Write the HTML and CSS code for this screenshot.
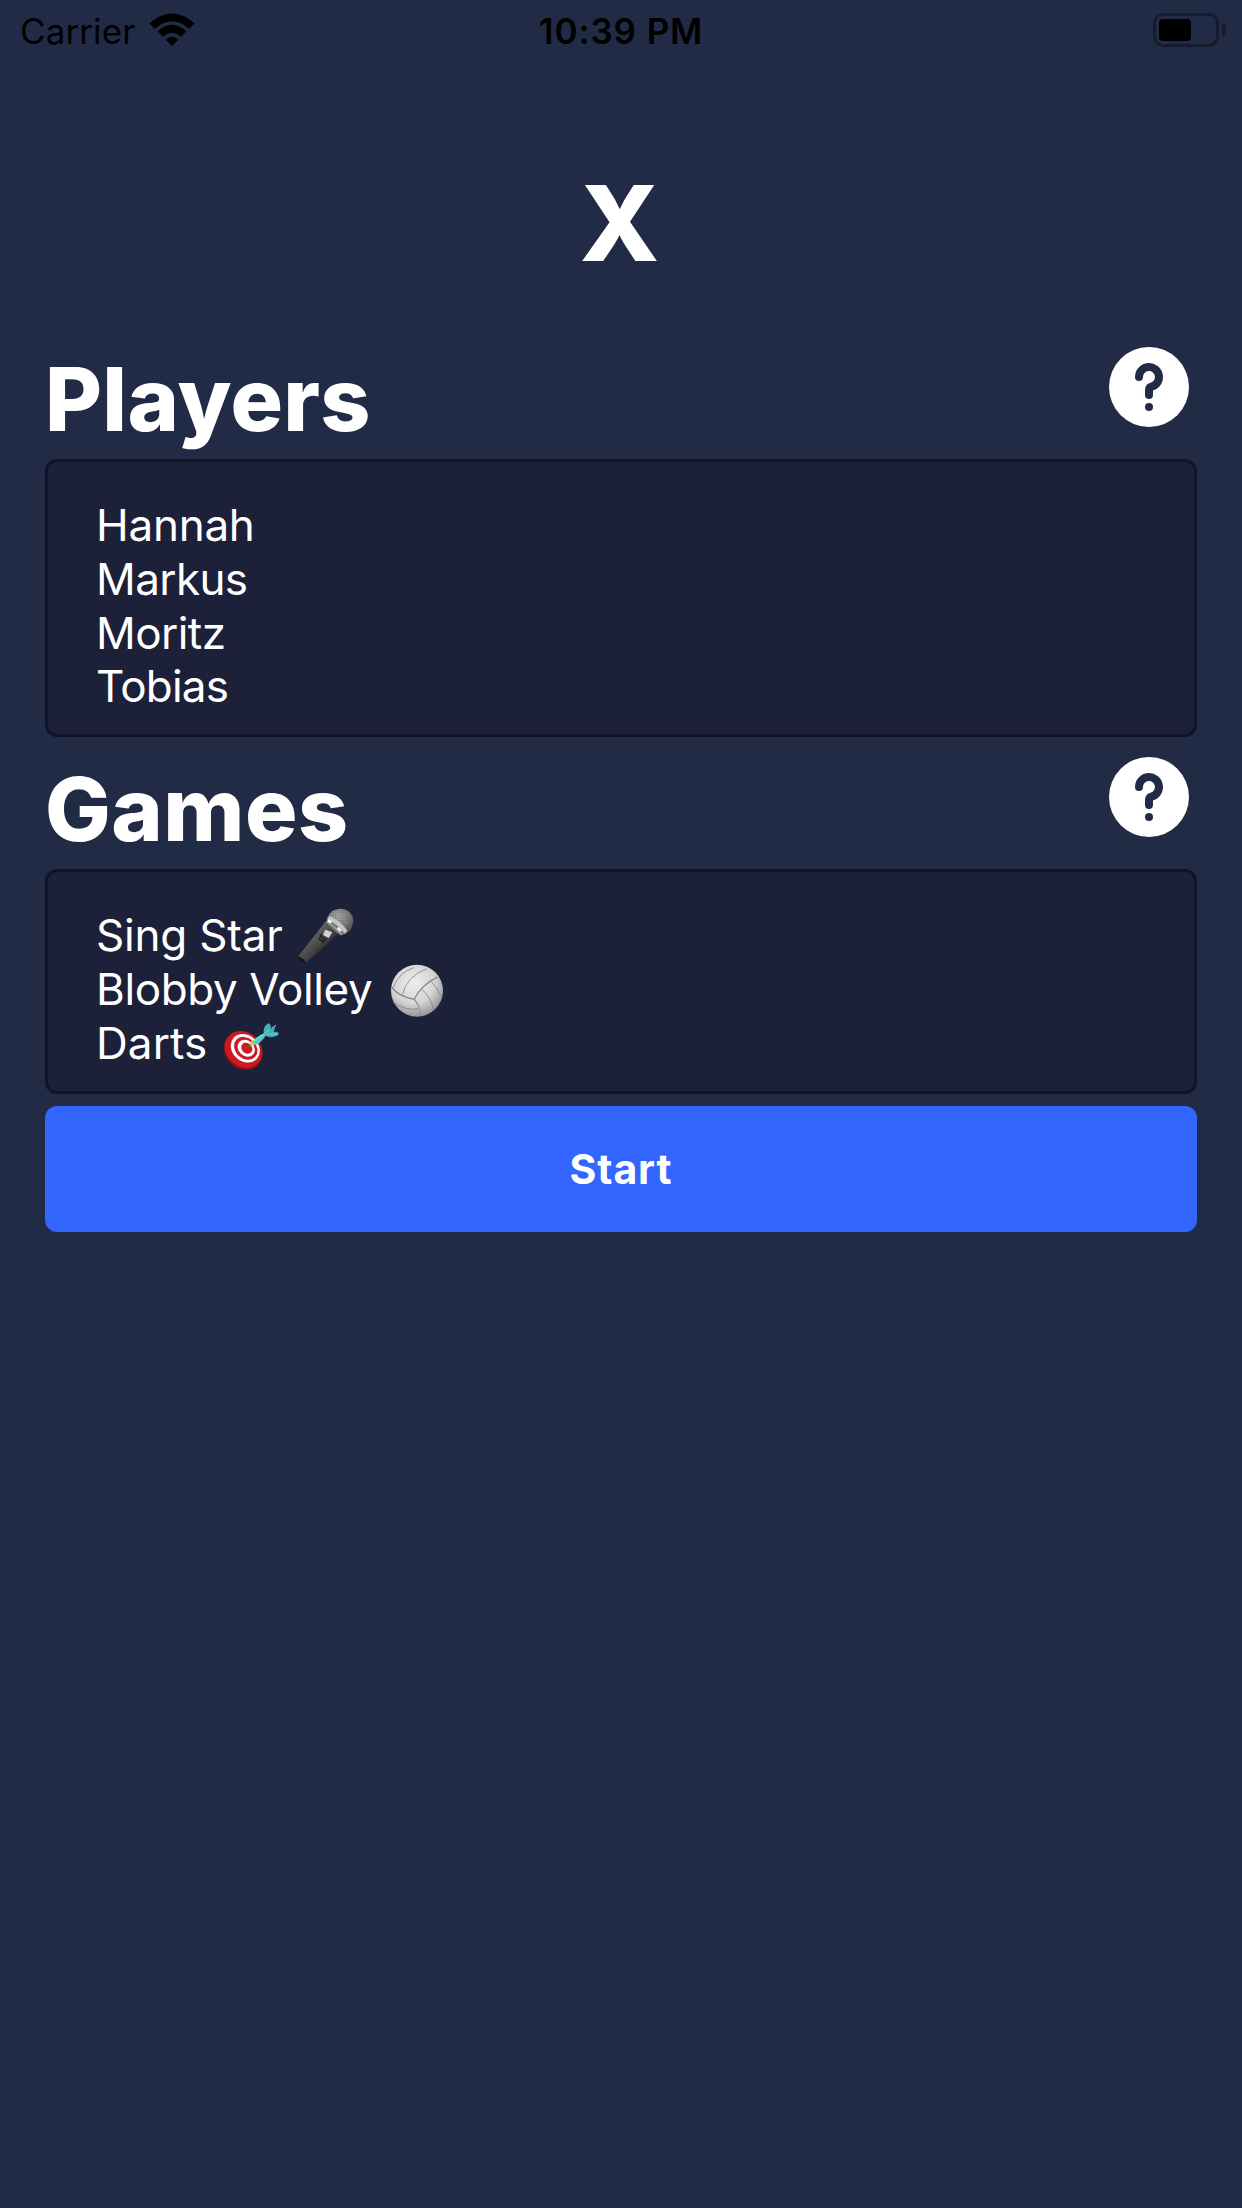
FILE: index.html
```
<!DOCTYPE html>
<html lang="en">
<head>
<meta charset="utf-8">
<title>X</title>
<link rel="stylesheet" href="styles.css">
</head>
<body>
<header class="status">
  <div class="status-left">
    <span class="carrier">Carrier</span>
    <svg class="wifi" viewBox="0 0 138 102">
      <path d="M1 31Q69-28 137 31L121 47Q69 2 17 47Z"/>
      <path d="M26 55Q69 16 112 55L96 71Q69 47 42 71Z"/>
      <path d="M50 80Q69 63 88 80L69 99Z"/>
    </svg>
  </div>
  <span class="time">10:39 PM</span>
  <div class="status-right">
    <div class="battery"><div class="charge"></div></div>
    <div class="nub"></div>
  </div>
</header>
<main class="screen">
  <h1 class="title">X</h1>
  <section>
    <div class="heading">
      <h2 class="players">Players</h2>
      <svg class="help" viewBox="0 0 80 80">
        <circle cx="40" cy="40" r="40"/>
        <path d="M30 30A10 10 0 1 1 42.500 39.700Q40 40.300 40 43V48"/>
        <circle class="dot" cx="40" cy="60" r="4"/>
      </svg>
    </div>
    <ul class="card card-players">
      <li class="hannah">Hannah</li>
      <li class="markus">Markus</li>
      <li class="moritz">Moritz</li>
      <li class="tobias">Tobias</li>
    </ul>
  </section>
  <section>
    <div class="heading">
      <h2 class="games">Games</h2>
      <svg class="help" viewBox="0 0 80 80">
        <circle cx="40" cy="40" r="40"/>
        <path d="M30 30A10 10 0 1 1 42.500 39.700Q40 40.300 40 43V48"/>
        <circle class="dot" cx="40" cy="60" r="4"/>
      </svg>
    </div>
    <ul class="card card-games">
      <li><span class="sing">Sing Star</span>
        <svg class="emoji" viewBox="804 84 168 168" role="img" aria-label="Microphone">
          <defs>
            <linearGradient id="handle" x1="0" y1="0" x2="1" y2="1"><stop offset=".3" stop-color="#666"/><stop offset=".5" stop-color="#4a4a4a"/><stop offset=".75" stop-color="#202020"/></linearGradient>
            <radialGradient id="mesh" cx=".4" cy=".3" r=".7"><stop offset="0" stop-color="#b8b8b8"/><stop offset=".6" stop-color="#858585"/><stop offset="1" stop-color="#555"/></radialGradient>
            <pattern id="grid" width="5" height="5" patternUnits="userSpaceOnUse"><path d="M0 0H5M0 0V5" stroke="#444" stroke-width="1.800"/></pattern>
          </defs>
          <path d="M805 229L887 124Q914 128 929 157L829 248Q816 252 805 229Z" fill="url(#handle)"/>
          <path d="M805 229Q819 234 829 248Q821 252 812 243Q804 236 805 229Z" fill="#161616"/>
          <path d="M894 112Q900 87 933 86Q967 89 970 121Q969 150 947 162Z" fill="url(#mesh)"/>
          <path d="M894 112Q900 87 933 86Q967 89 970 121Q969 150 947 162Z" fill="url(#grid)" opacity=".65"/>
          <path d="M892 110Q923 120 948 159L938 165Q924 163 911 150Q892 136 889 124Z" fill="#777"/>
          <path d="M897 108Q929 119 952 152L944 161Q924 132 893 120Z" fill="#c2c4c7"/>
          <path d="M895 118L906 123L902 131L892 125Z" fill="#fff"/>
          <path d="M925 140L936 150L930 156L920 146Z" fill="#eee"/>
          <path d="M890 126Q914 137 934 165" fill="none" stroke="#aaa" stroke-width="4"/>
          <path d="M873 162L889 173L880 188L866 177Z" fill="#262626" stroke="#111" stroke-width="2"/>
          <path d="M886 149L907 157L896 174L879 165Z" fill="#d4d2d5"/>
          <path d="M867 171L881 180M875 165L888 174" stroke="#777" stroke-width="2"/>
        </svg>
      </li>
      <li><span class="blobby">Blobby Volley</span>
        <svg class="emoji" viewBox="326 216 168 168" role="img" aria-label="Volleyball">
          <defs><radialGradient id="ball" cx=".43" cy=".35" r=".67"><stop offset="0" stop-color="#eee"/><stop offset=".6" stop-color="#d5d5d5"/><stop offset="1" stop-color="#929292"/></radialGradient></defs>
          <circle cx="410" cy="302" r="78" fill="url(#ball)"/>
          <g fill="none" stroke="#858585" stroke-linecap="round">
            <path d="M336 293Q350 318 402 328Q421 286 470 262M402 328Q417 347 423 376" stroke-width="4"/>
            <path d="M365 316Q380 257 438 237M339 292Q355 247 400 233M425 298Q452 323 459 358M452 273Q475 299 484 322M339 337Q371 362 414 357" stroke-width="2.500"/>
          </g>
          <path d="M404 333Q418 350 424 376M405 327Q424 291 470 266" fill="none" stroke="#fff" stroke-width="1.500" opacity=".5"/>
        </svg>
      </li>
      <li><span class="darts">Darts</span>
        <svg class="emoji" viewBox="579 408 168 168" role="img" aria-label="Dartboard">
          <g transform="rotate(42 638 511)">
            <ellipse cx="640" cy="511" rx="62" ry="53" fill="#8f1015"/>
            <ellipse cx="638" cy="507" rx="60" ry="51" fill="#cc1820"/>
          </g>
          <g transform="rotate(42 646 505)">
            <ellipse cx="646" cy="505" rx="47" ry="39" fill="#fff"/>
            <ellipse cx="647" cy="504" rx="38" ry="31" fill="#c91b22"/>
            <ellipse cx="648" cy="503" rx="28" ry="23" fill="#fff"/>
            <ellipse cx="649" cy="502" rx="18" ry="15" fill="#c91b22"/>
          </g>
          <path d="M650 503L669 489" stroke="#795b21" stroke-width="4"/>
          <path d="M665 479L679 493L660 499Z" fill="#e6c520"/>
          <path d="M668 486Q674 472 703 460L707 467Q693 488 675 496Z" fill="#55cbd0"/>
          <path d="M701 462Q697 439 716 429Q727 438 720 451L737 435L731 457Q744 451 747 463Q733 477 708 468Z" fill="#42afb7"/>
          <path d="M671 484L738 435M707 463L743 462" fill="none" stroke="#8de3e4" stroke-width="2"/>
        </svg>
      </li>
    </ul>
  </section>
  <button class="start" type="button"><span>Start</span></button>
</main>
</body>
</html>
```
FILE: styles.css
```
* { box-sizing: border-box; }
body {
  margin: 0;
  min-height: 2208px;
  background: #222b45;
  color: #fff;
  font-family: Inter, "Liberation Sans", sans-serif;
}
.status {
  display: grid;
  grid-template-columns: 1fr auto 1fr;
  height: 60px;
  color: #000;
  font-size: 35px;
  line-height: 60px;
}
.status-left { display: flex; padding-left: 20px; }
.carrier { width: 129px; padding-top: 1px; letter-spacing: .1px; }
.wifi { width: 46px; height: 34px; margin-top: 13px; }
.time { padding-top: 1px; font-weight: 600; letter-spacing: .9px; }
.status-right { display: flex; justify-content: flex-end; padding: 13px 16px 0 0; }
.battery {
  width: 66px;
  height: 34px;
  padding: 3px;
  border: 3px solid #161c2e;
  border-radius: 10px;
}
.charge { width: 32px; height: 22px; border-radius: 4px; background: #000; }
.nub { width: 4px; height: 12px; margin: 11px 0 0 3px; border-radius: 0 4px 4px 0; background: #161c2e; }
.screen { padding: 103px 45px 0; }
h1, h2, ul { margin: 0; padding: 0; font-weight: 800; }
.title { height: 164px; padding-right: 3px; text-align: center; font-size: 104.5px; line-height: 120px; }
.heading { display: flex; justify-content: space-between; height: 132px; padding: 12px 8px 0 0; }
.heading h2 { font-size: 87.5px; line-height: 120px; }
.heading .players { letter-spacing: .3px; }
.heading .games { letter-spacing: .5px; }
.help { width: 80px; height: 80px; margin-top: 8px; fill: #fff; }
.help path { fill: none; stroke: #222b45; stroke-width: 8px; stroke-linecap: round; stroke-linejoin: round; }
.help .dot { fill: #222b45; }
.card {
  padding: 36px 48px 0;
  border: 3px solid #101426;
  border-radius: 12px;
  background: #1c2039;
  list-style: none;
  font-size: 44px;
  font-weight: 400;
  line-height: 54px;
}
.card li { display: flex; align-items: center; height: 53.8px; }
.card-players { height: 278px; }
.card-games { height: 225px; }
.hannah { letter-spacing: -.25px; }
.markus { letter-spacing: -.6px; }
.moritz { letter-spacing: -.55px; }
.tobias { letter-spacing: -.8px; }
.emoji { flex: none; width: 56px; height: 56px; margin-top: 2px; }
.sing { width: 202px; letter-spacing: -.2px; }
.blobby { width: 292.7px; letter-spacing: -.38px; white-space: nowrap; }
.darts { width: 127px; letter-spacing: .1px; }
.start {
  display: block;
  width: 100%;
  height: 126px;
  margin-top: 12px;
  padding: 0;
  border: 0;
  border-radius: 12px;
  background: #36f;
  color: #fff;
  font: 700 41px/125px Inter, "Liberation Sans", sans-serif;
  letter-spacing: .9px;
}
```
